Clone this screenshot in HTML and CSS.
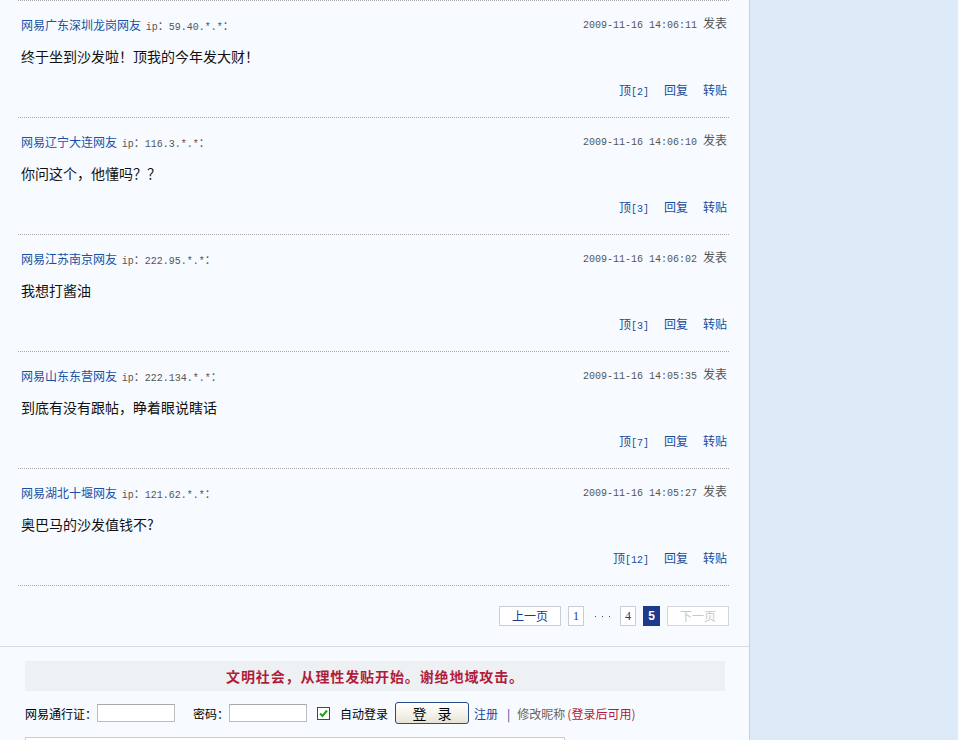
FILE: index.html
```html
<!DOCTYPE html>
<html>

<head>
    <meta charset="utf-8">
    <title>网易跟帖</title>
    <link rel="stylesheet" href="styles.css">
</head>

<body>
    <div id="page">
        <div id="main">
            <div id="posts">
                <div class="post">
                    <div class="post-head">
                        <div><a class="author" href="#">网易广东深圳龙岗网友</a> <span class="ip">ip<span class="cn">：</span>59.40.*.*<span class="cn">：</span></span></div>
                        <div class="time"><span class="num">2009-11-16 14:06:11</span><span class="fb">发表</span></div>
                    </div>
                    <div class="post-body">终于坐到沙发啦！顶我的今年发大财！</div>
                    <div class="post-ops"><a href="#">顶<span class="num">[2]</span></a><a href="#">回复</a><a href="#">转贴</a></div>
                </div>
                <div class="post">
                    <div class="post-head">
                        <div><a class="author" href="#">网易辽宁大连网友</a> <span class="ip">ip<span class="cn">：</span>116.3.*.*<span class="cn">：</span></span></div>
                        <div class="time"><span class="num">2009-11-16 14:06:10</span><span class="fb">发表</span></div>
                    </div>
                    <div class="post-body">你问这个，他懂吗？？</div>
                    <div class="post-ops"><a href="#">顶<span class="num">[3]</span></a><a href="#">回复</a><a href="#">转贴</a></div>
                </div>
                <div class="post">
                    <div class="post-head">
                        <div><a class="author" href="#">网易江苏南京网友</a> <span class="ip">ip<span class="cn">：</span>222.95.*.*<span class="cn">：</span></span></div>
                        <div class="time"><span class="num">2009-11-16 14:06:02</span><span class="fb">发表</span></div>
                    </div>
                    <div class="post-body">我想打酱油</div>
                    <div class="post-ops"><a href="#">顶<span class="num">[3]</span></a><a href="#">回复</a><a href="#">转贴</a></div>
                </div>
                <div class="post">
                    <div class="post-head">
                        <div><a class="author" href="#">网易山东东营网友</a> <span class="ip">ip<span class="cn">：</span>222.134.*.*<span class="cn">：</span></span></div>
                        <div class="time"><span class="num">2009-11-16 14:05:35</span><span class="fb">发表</span></div>
                    </div>
                    <div class="post-body">到底有没有跟帖，睁着眼说瞎话</div>
                    <div class="post-ops"><a href="#">顶<span class="num">[7]</span></a><a href="#">回复</a><a href="#">转贴</a></div>
                </div>
                <div class="post">
                    <div class="post-head">
                        <div><a class="author" href="#">网易湖北十堰网友</a> <span class="ip">ip<span class="cn">：</span>121.62.*.*<span class="cn">：</span></span></div>
                        <div class="time"><span class="num">2009-11-16 14:05:27</span><span class="fb">发表</span></div>
                    </div>
                    <div class="post-body">奥巴马的沙发值钱不?</div>
                    <div class="post-ops"><a href="#">顶<span class="num">[12]</span></a><a href="#">回复</a><a href="#">转贴</a></div>
                </div>

                <div class="pager">
                    <a class="page-btn wide" href="#">上一页</a>
                    <a class="page-btn num" href="#">1</a>
                    <span class="dots"><i></i><i></i><i></i></span>
                    <a class="page-btn num" href="#">4</a>
                    <span class="page-btn num current">5</span>
                    <span class="page-btn wide disabled">下一页</span>
                </div>
            </div>

            <div id="reply">
                <div class="notice">文明社会，从理性发贴开始。谢绝地域攻击。</div>
                <div class="login">
                    <label>网易通行证：</label>
                    <input class="field" type="text" />
                    <label class="pwd">密码：</label>
                    <input class="field" type="password" />
                    <span class="check">
                        <svg width="11" height="11" viewBox="0 0 11 11"><path d="M2 5.5 L4.5 8 L9 2.5" fill="none" stroke="#21a121" stroke-width="2"/></svg>
                    </span>
                    <label class="auto">自动登录</label>
                    <button class="login-btn">登 录</button>
                    <a class="reg" href="#">注册</a>
                    <span class="sep">|</span>
                    <span class="nick">修改昵称</span>
                    <span class="hint">(登录后可用)</span>
                </div>
                <div class="editor"></div>
            </div>
        </div>
        <div id="side"></div>
    </div>
</body>

</html>
```
FILE: styles.css
```css
html,
body {
    margin: 0;
    padding: 0;
    height: 740px;
    overflow: hidden;
}

body {
    font-family: "Noto Sans CJK SC", "Liberation Sans", sans-serif;
    font-size: 12px;
    color: #000;
}

a {
    text-decoration: none;
}

#page {
    display: flex;
    width: 960px;
    height: 740px;
}

#main {
    width: 749px;
    background-color: #f7fbff;
    border-right: 1px solid #c6d3df;
}

#side {
    width: 208px;
    background-color: #dceaf8;
    border-right: 1px solid #f0f6fc;
    box-shadow: inset -1px 0 0 #e6f0fa;
}

#posts {
    margin: 0 20px 0 18px;
    border-top: 1px dotted #a9a9a9;
}

.post {
    height: 101px;
    padding: 15px 2px 0 3px;
    border-bottom: 1px dotted #a9a9a9;
}

.post-head {
    display: flex;
    justify-content: space-between;
    line-height: 18px;
    height: 18px;
}

.author {
    color: #1a50a3;
}

.ip {
    color: #555;
    font-family: "Liberation Mono", monospace;
    font-size: 10px;
    margin-left: 2px;
}

.ip .cn {
    font-family: "Noto Sans CJK SC", sans-serif;
    font-size: 11px;
}

.time {
    color: #555;
    margin-top: -2px;
}

.time .fb {
    margin-left: 6px;
}

.num {
    font-family: "Liberation Mono", monospace;
    font-size: 10px;
}

.post-body {
    margin-top: 11px;
    font-size: 14px;
    line-height: 22px;
    color: #111;
}

.post-ops {
    margin-top: 14px;
    display: flex;
    justify-content: flex-end;
    gap: 15px;
    line-height: 18px;
}

.post-ops a {
    color: #1a4a9a;
}

.pager {
    display: flex;
    justify-content: flex-end;
    align-items: center;
    gap: 7px;
    height: 60px;
}

.page-btn {
    display: inline-block;
    box-sizing: border-box;
    height: 20px;
    line-height: 18px;
    border: 1px solid #c9ced6;
    background-color: #fff;
    color: #1a3a8c;
    text-align: center;
}

.page-btn.wide {
    width: 62px;
}

.page-btn.num {
    width: 16px;
    font-family: "Liberation Serif", serif;
    font-size: 12px;
}

.page-btn.current {
    width: 17px;
    background-color: #1f3a8a;
    border-color: #1f3a8a;
    color: #fff;
    font-weight: bold;
    font-family: "Liberation Sans", sans-serif;
}

.page-btn.disabled {
    color: #c8c8c8;
    border-color: #d3d7dd;
}

.dots {
    display: flex;
    box-sizing: border-box;
    gap: 6px;
    width: 22px;
    padding-left: 4px;
}

.dots i {
    width: 1px;
    height: 1px;
    background-color: #444;
}

#reply {
    border-top: 1px solid #d6dce4;
    padding: 14px 24px 0 25px;
}

.notice {
    height: 30px;
    line-height: 30px;
    background-color: #eef1f4;
    color: #b01d3a;
    font-size: 14px;
    font-weight: bold;
    text-align: center;
    letter-spacing: 0.9px;
}

.login {
    display: flex;
    align-items: center;
    height: 22px;
    margin-top: 11px;
}

.field {
    box-sizing: border-box;
    width: 78px;
    height: 18px;
    margin: 0;
    border: 1px solid #bdbdbd;
    border-top-color: #a9a9a9;
    background-color: #fff;
}

.pwd {
    margin-left: 18px;
}

.check {
    box-sizing: border-box;
    display: inline-flex;
    align-items: center;
    justify-content: center;
    width: 13px;
    height: 13px;
    margin-left: 10px;
    border: 1px solid #1c5180;
    background-color: #fff;
}

.auto {
    margin-left: 10px;
}

.login-btn {
    box-sizing: border-box;
    width: 74px;
    height: 22px;
    margin-left: 7px;
    padding: 0;
    border: 1px solid #2a4a8a;
    border-radius: 3px;
    background: linear-gradient(#ffffff, #f3f1e8 60%, #e6e2d3);
    font-family: "Noto Sans CJK SC", sans-serif;
    font-size: 14px;
    line-height: 18px;
    letter-spacing: 4px;
    text-indent: 4px;
    color: #000;
}

.reg {
    margin-left: 5px;
    color: #1a4a9a;
}

.sep {
    margin-left: 9px;
    color: #1a4a9a;
}

.nick {
    margin-left: 7px;
    color: #666;
}

.hint {
    margin-left: 2px;
    color: #b01d3a;
}

.editor {
    margin-top: 13px;
    width: 538px;
    height: 100px;
    border: 1px solid #ccc;
    background-color: #fff;
}
```
